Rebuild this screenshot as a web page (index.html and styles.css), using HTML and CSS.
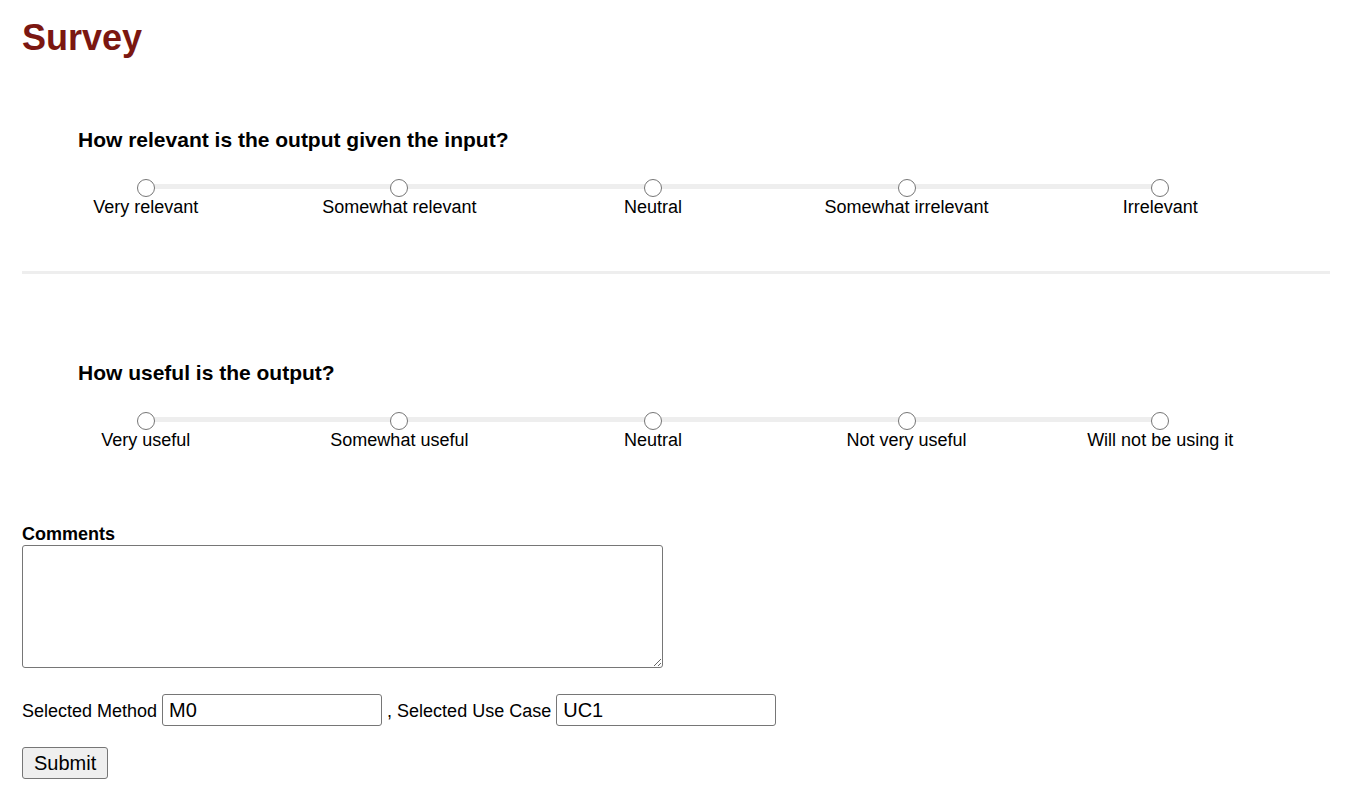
FILE: index.html
```html
<!DOCTYPE html>
<html lang="en">
<head>
<meta charset="utf-8">
<title>Survey</title>
<link rel="stylesheet" href="styles.css">
</head>
<body>
<div class="page">
  <h1 class="title">Survey</h1>

  <section class="question q-first">
    <h3 class="q-title">How relevant is the output given the input?</h3>
    <div class="scale">
      <div class="track"></div>
      <label class="opt"><input type="radio" name="relevance" class="radio"><span class="opt-label">Very relevant</span></label>
      <label class="opt"><input type="radio" name="relevance" class="radio"><span class="opt-label">Somewhat relevant</span></label>
      <label class="opt"><input type="radio" name="relevance" class="radio"><span class="opt-label">Neutral</span></label>
      <label class="opt"><input type="radio" name="relevance" class="radio"><span class="opt-label">Somewhat irrelevant</span></label>
      <label class="opt"><input type="radio" name="relevance" class="radio"><span class="opt-label">Irrelevant</span></label>
    </div>
  </section>

  <hr class="divider">

  <section class="question q-second">
    <h3 class="q-title">How useful is the output?</h3>
    <div class="scale">
      <div class="track"></div>
      <label class="opt"><input type="radio" name="usefulness" class="radio"><span class="opt-label">Very useful</span></label>
      <label class="opt"><input type="radio" name="usefulness" class="radio"><span class="opt-label">Somewhat useful</span></label>
      <label class="opt"><input type="radio" name="usefulness" class="radio"><span class="opt-label">Neutral</span></label>
      <label class="opt"><input type="radio" name="usefulness" class="radio"><span class="opt-label">Not very useful</span></label>
      <label class="opt"><input type="radio" name="usefulness" class="radio"><span class="opt-label">Will not be using it</span></label>
    </div>
  </section>

  <div class="comments">
    <label class="comments-label" for="comments">Comments</label>
    <textarea id="comments" class="comments-box"></textarea>
  </div>

  <div class="meta-row">
    <span class="meta-text">Selected Method</span>
    <input type="text" class="meta-input" value="M0">
    <span class="meta-text">, Selected Use Case</span>
    <input type="text" class="meta-input" value="UC1">
  </div>

  <button type="button" class="submit">Submit</button>
</div>
</body>
</html>
```

FILE: styles.css
```css
html, body {
  margin: 0;
  padding: 0;
  background: #fff;
}

body {
  font-family: "Liberation Sans", Arial, sans-serif;
  font-size: 18px;
  color: #000;
}

.page {
  padding: 17px 30px 0 22px;
}

.title {
  margin: 0;
  font-size: 36px;
  line-height: 42px;
  font-weight: bold;
  color: #7b1711;
}

.question {
  display: flex;
  flex-direction: column;
}

.q-first {
  margin-top: 69px;
}

.q-second {
  margin-top: 87px;
}

.q-title {
  margin: 0;
  padding-left: 56px;
  font-size: 21px;
  line-height: 24px;
  font-weight: bold;
}

.scale {
  position: relative;
  display: flex;
  margin: 27px 43px 0 -3px;
}

.track {
  position: absolute;
  left: 10%;
  right: 10%;
  top: 5px;
  height: 5px;
  background: #eeeeee;
}

.opt {
  position: relative;
  flex: 1 1 0;
  display: flex;
  flex-direction: column;
  align-items: center;
}

.radio {
  appearance: none;
  -webkit-appearance: none;
  width: 18px;
  height: 18px;
  margin: 0;
  border: 1.5px solid #767676;
  border-radius: 50%;
  background: #fff;
  box-sizing: border-box;
}

.opt-label {
  margin-top: 0;
  line-height: 20px;
  white-space: nowrap;
}

.divider {
  margin: 54px 0 0 0;
  height: 3px;
  border: none;
  background: #eeeeee;
}

.comments {
  margin-top: 74px;
}

.comments-label {
  display: block;
  font-weight: bold;
  line-height: 21px;
  margin-bottom: 0;
}

.comments-box {
  display: block;
  width: 641px;
  height: 123px;
  box-sizing: border-box;
  margin: 0;
  border: 1px solid #767676;
  border-radius: 3px;
  font-family: "Liberation Mono", monospace;
  font-size: 13px;
}

.meta-row {
  display: flex;
  align-items: center;
  gap: 5px;
  margin-top: 26px;
}

.meta-text {
  line-height: 21px;
  margin-top: 2px;
}

.meta-input {
  width: 220px;
  height: 32px;
  box-sizing: border-box;
  margin: 0;
  padding: 2px 6px;
  border: 1px solid #767676;
  border-radius: 3px;
  font-family: "Liberation Sans", Arial, sans-serif;
  font-size: 20px;
  color: #000;
  background: #fff;
}

.submit {
  display: block;
  margin-top: 21px;
  height: 32px;
  padding: 0 11px;
  box-sizing: border-box;
  border: 1px solid #767676;
  border-radius: 3px;
  background: #efefef;
  font-family: "Liberation Sans", Arial, sans-serif;
  font-size: 20px;
  color: #000;
}
```
